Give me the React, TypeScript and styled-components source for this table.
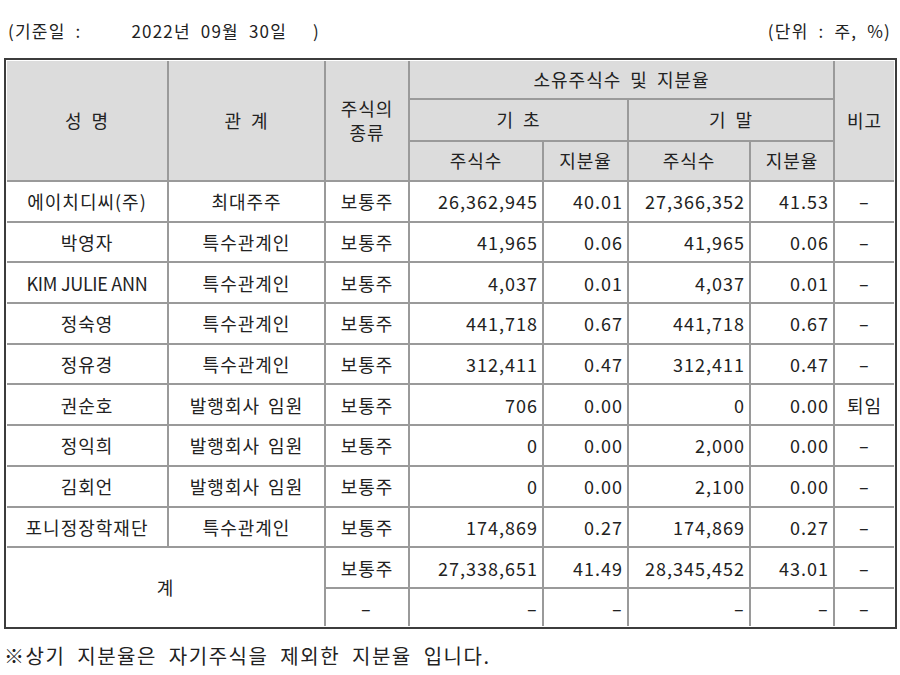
import React from "react";
import styled, { createGlobalStyle } from "styled-components";

const GlobalStyle = createGlobalStyle`
  html, body { margin: 0; padding: 0; background: #ffffff; }
  body {
    font-family: "Noto Sans CJK KR", "Noto Sans", sans-serif;
    color: #222;
  }
`;

const Page = styled.div`
  width: 900px;
  height: 675px;
  box-sizing: border-box;
  padding: 0 3px 0 4px;
  display: flex;
  flex-direction: column;
`;

const Caption = styled.div`
  height: 58px;
  display: flex;
  align-items: center;
  justify-content: space-between;
  font-size: 17px;
  letter-spacing: 1.2px;
  word-spacing: 5px;
  padding: 2px 6px 0 4px;
  box-sizing: border-box;
  white-space: pre;
`;

const CaptionGroup = styled.span`
  display: flex;
  align-items: center;
`;

const CaptionPart = styled.span<{ $gap?: number }>`
  margin-left: ${(p) => p.$gap ?? 0}px;
`;

const Frame = styled.div`
  border: 2px solid #3c3c3c;
  padding: 1px;
  background: #fff;
`;

const Table = styled.table`
  width: 887px;
  table-layout: fixed;
  border-collapse: collapse;
  border-style: hidden;
  font-size: 18px;
  letter-spacing: 1px;
  word-spacing: 3px;
`;

const Row = styled.tr<{ $h: number }>`
  height: ${(p) => p.$h}px;
`;

const Th = styled.th`
  background: #dcdcdc;
  font-weight: normal;
  border: 2px solid #9a9a9a;
  text-align: center;
  padding: 0;
  line-height: 1.3;
  word-spacing: 4px;
`;

const Td = styled.td<{ $align?: "left" | "right" | "center"; $latin?: boolean }>`
  border: 2px solid #9a9a9a;
  text-align: ${(p) => p.$align ?? "center"};
  padding: ${(p) => (p.$align === "right" ? "0 4px 0 0" : "0")};
  white-space: nowrap;
  line-height: 1;
  ${(p) => (p.$latin ? "letter-spacing: -0.3px; word-spacing: 0;" : "")}
`;

const Dash = styled.span`
  display: inline-block;
  transform: scaleX(1.7);
  transform-origin: center;
  margin: 0 2px;
`;

const Note = styled.div`
  margin-top: 12px;
  font-size: 20px;
  letter-spacing: 1.5px;
  word-spacing: 6px;
`;

type Holder = {
  name: string;
  rel: string;
  kind: string;
  a: string;
  ap: string;
  b: string;
  bp: string;
  note: string;
};

const rows: Holder[] = [
  { name: "에이치디씨(주)", rel: "최대주주", kind: "보통주", a: "26,362,945", ap: "40.01", b: "27,366,352", bp: "41.53", note: "-" },
  { name: "박영자", rel: "특수관계인", kind: "보통주", a: "41,965", ap: "0.06", b: "41,965", bp: "0.06", note: "-" },
  { name: "KIM JULIE ANN", rel: "특수관계인", kind: "보통주", a: "4,037", ap: "0.01", b: "4,037", bp: "0.01", note: "-" },
  { name: "정숙영", rel: "특수관계인", kind: "보통주", a: "441,718", ap: "0.67", b: "441,718", bp: "0.67", note: "-" },
  { name: "정유경", rel: "특수관계인", kind: "보통주", a: "312,411", ap: "0.47", b: "312,411", bp: "0.47", note: "-" },
  { name: "권순호", rel: "발행회사 임원", kind: "보통주", a: "706", ap: "0.00", b: "0", bp: "0.00", note: "퇴임" },
  { name: "정익희", rel: "발행회사 임원", kind: "보통주", a: "0", ap: "0.00", b: "2,000", bp: "0.00", note: "-" },
  { name: "김회언", rel: "발행회사 임원", kind: "보통주", a: "0", ap: "0.00", b: "2,100", bp: "0.00", note: "-" },
  { name: "포니정장학재단", rel: "특수관계인", kind: "보통주", a: "174,869", ap: "0.27", b: "174,869", bp: "0.27", note: "-" },
];

const widths = [161, 157, 84, 134, 85, 122, 84, 60];

const cell = (v: string) => (v === "-" ? <Dash>-</Dash> : v);

export default function App() {
  return (
    <>
      <GlobalStyle />
      <Page>
        <Caption>
          <CaptionGroup>
            <CaptionPart>(기준일 :</CaptionPart>
            <CaptionPart $gap={50}>2022년 09월 30일</CaptionPart>
            <CaptionPart $gap={26}>)</CaptionPart>
          </CaptionGroup>
          <CaptionPart>(단위 : 주, %)</CaptionPart>
        </Caption>
        <Frame>
          <Table>
            <colgroup>
              {widths.map((w, i) => (
                <col key={i} style={{ width: w }} />
              ))}
            </colgroup>
            <thead>
              <Row $h={38}>
                <Th rowSpan={3}>성 명</Th>
                <Th rowSpan={3}>관 계</Th>
                <Th rowSpan={3}>
                  주식의
                  <br />
                  종류
                </Th>
                <Th colSpan={4}>소유주식수 및 지분율</Th>
                <Th rowSpan={3}>비고</Th>
              </Row>
              <Row $h={42}>
                <Th colSpan={2}>기 초</Th>
                <Th colSpan={2}>기 말</Th>
              </Row>
              <Row $h={40}>
                <Th>주식수</Th>
                <Th>지분율</Th>
                <Th>주식수</Th>
                <Th>지분율</Th>
              </Row>
            </thead>
            <tbody>
              {rows.map((r) => (
                <Row $h={40.7} key={r.name}>
                  <Td $latin={/^[A-Z ]+$/.test(r.name)}>{r.name}</Td>
                  <Td>{r.rel}</Td>
                  <Td>{r.kind}</Td>
                  <Td $align="right">{r.a}</Td>
                  <Td $align="right">{r.ap}</Td>
                  <Td $align="right">{r.b}</Td>
                  <Td $align="right">{r.bp}</Td>
                  <Td>{cell(r.note)}</Td>
                </Row>
              ))}
              <Row $h={41}>
                <Td rowSpan={2} colSpan={2}>계</Td>
                <Td>보통주</Td>
                <Td $align="right">27,338,651</Td>
                <Td $align="right">41.49</Td>
                <Td $align="right">28,345,452</Td>
                <Td $align="right">43.01</Td>
                <Td>{cell("-")}</Td>
              </Row>
              <Row $h={38}>
                <Td>{cell("-")}</Td>
                <Td $align="right">{cell("-")}</Td>
                <Td $align="right">{cell("-")}</Td>
                <Td $align="right">{cell("-")}</Td>
                <Td $align="right">{cell("-")}</Td>
                <Td>{cell("-")}</Td>
              </Row>
            </tbody>
          </Table>
        </Frame>
        <Note>※상기 지분율은 자기주식을 제외한 지분율 입니다.</Note>
      </Page>
    </>
  );
}
